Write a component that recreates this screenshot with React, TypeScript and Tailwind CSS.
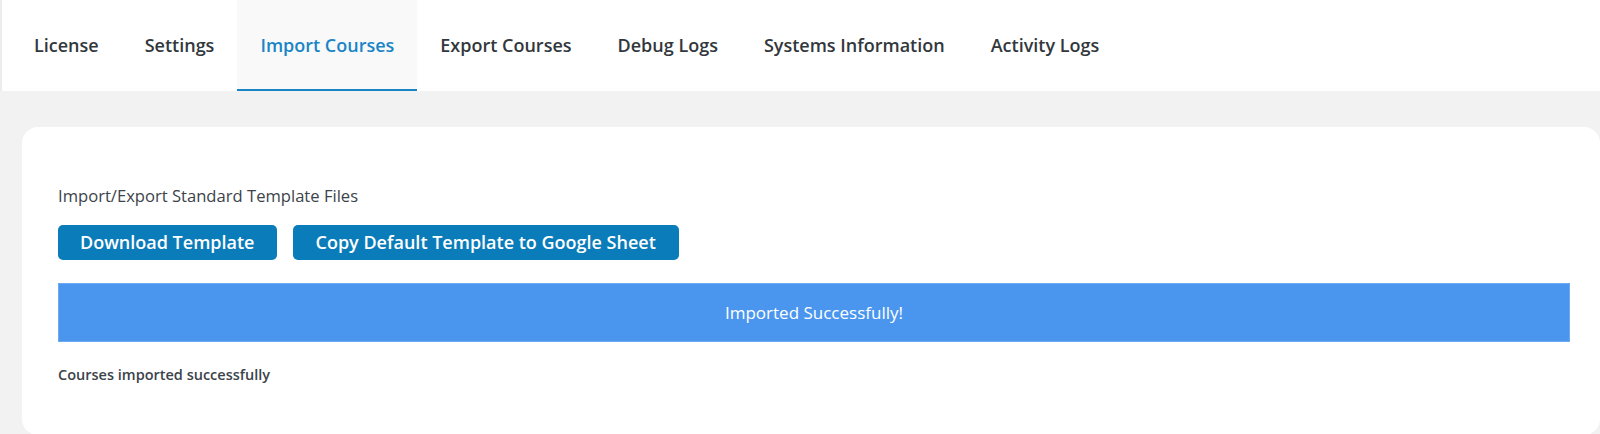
import { useState } from 'react';

const TABS = [
  'License',
  'Settings',
  'Import Courses',
  'Export Courses',
  'Debug Logs',
  'Systems Information',
  'Activity Logs',
];

export default function App() {
  const [active, setActive] = useState('Import Courses');

  return (
    <div className="min-h-[434px] w-[1600px] overflow-hidden bg-[#f2f2f2] font-['Open_Sans',sans-serif] text-[#3c434a]">
      {/* Tabs */}
      <div className="flex h-[91px] items-stretch border-l-2 border-[#ececec] bg-white pl-[9px]">
        {TABS.map((tab) => {
          const isActive = tab === active;
          return (
            <button
              key={tab}
              onClick={() => setActive(tab)}
              className={
                isActive
                  ? 'flex items-center border-b-2 border-[#1a85c6] bg-[#f9f9f9] px-[23px] pt-[1px] text-[18px] font-semibold text-[#1a85c6]'
                  : 'flex items-center border-b-2 border-transparent px-[23px] pt-[1px] text-[18px] font-semibold text-[#32373c]'
              }
            >
              {tab}
            </button>
          );
        })}
      </div>

      {/* Body */}
      <div className="pl-[22px] pt-[36px]">
        <div className="rounded-2xl bg-white pb-[50px] pl-[36px] pr-[30px] pt-[57px]">
          <p className="text-[16.6px] leading-6 text-[#3c434a]">
            Import/Export Standard Template Files
          </p>

          <div className="mt-[17px] flex gap-4">
            <button className="h-[35px] rounded-[5px] bg-[#0a7cba] px-[22px] text-[18px] font-semibold text-white">
              Download Template
            </button>
            <button className="h-[35px] rounded-[5px] bg-[#0a7cba] px-[23px] text-[18px] font-semibold text-white">
              Copy Default Template to Google Sheet
            </button>
          </div>

          <div className="mt-[23px] flex h-[59px] items-center justify-center border border-[#6eaaf3] bg-[#4a96ef] text-[17px] text-white">
            Imported Successfully!
          </div>

          <p className="mt-[23px] text-[14.5px] font-semibold leading-[20px] text-[#3c434a]">
            Courses imported successfully
          </p>
        </div>
      </div>
    </div>
  );
}
